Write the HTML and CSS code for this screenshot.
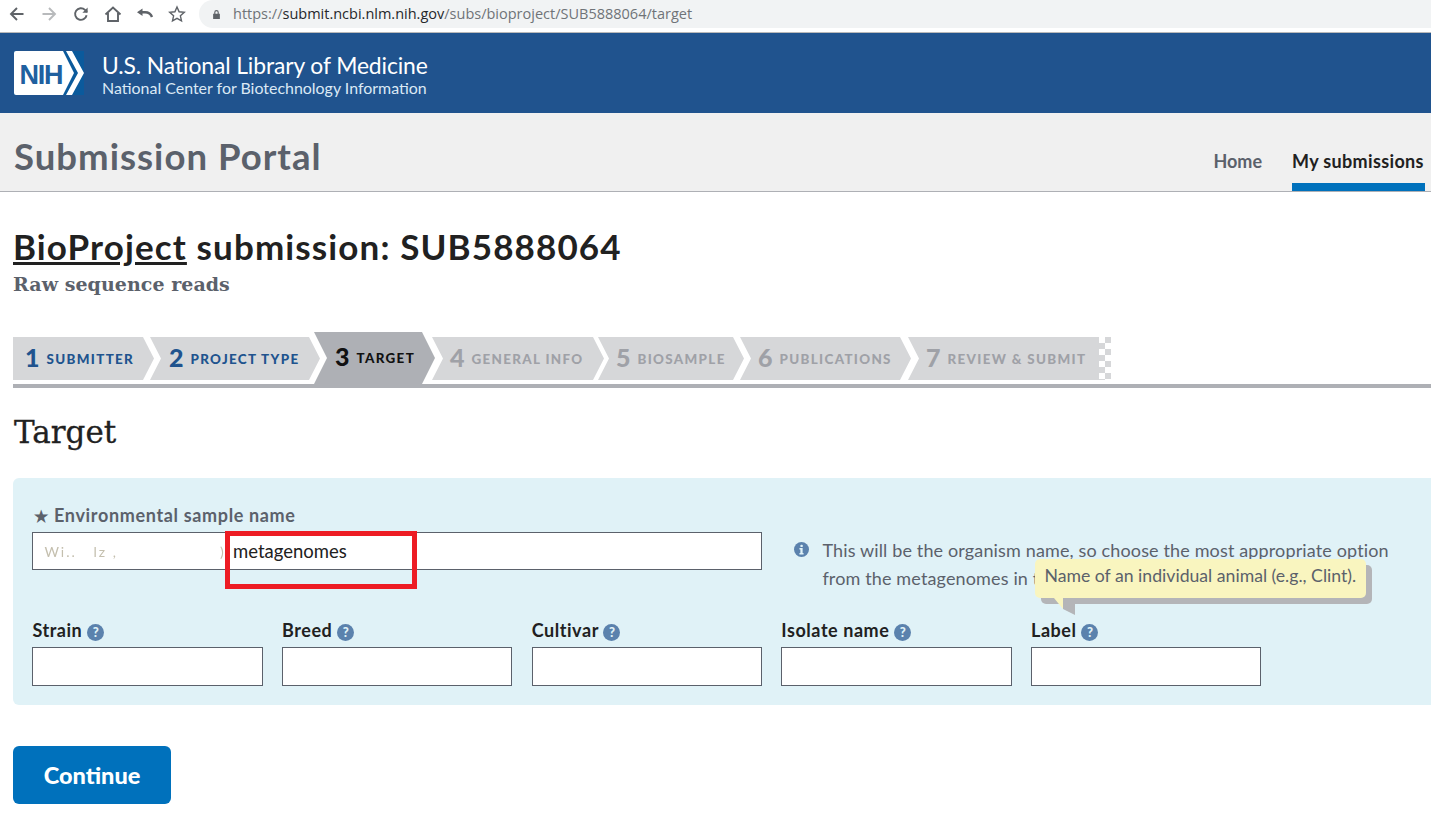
FILE: index.html
```html
<!DOCTYPE html>
<html lang="en">
<head>
<meta charset="utf-8">
<title>BioProject submission</title>
<link rel="stylesheet" href="styles.css">
</head>
<body>
<div class="browser">
  <div class="tools">
    <svg class="tool" viewBox="0 0 18 18"><path d="M15.500 9H3.500M9 3 3 9l6 6" class="st"/></svg>
    <svg class="tool" viewBox="0 0 18 18"><path d="M2.500 9h12M9 3l6 6-6 6" class="st light"/></svg>
    <svg class="tool" viewBox="0 0 18 18"><path d="M14.600 10.200A5.800 5.800 0 1 1 13 4.900L15 7" class="st"/><path d="M15.600 2.600v5.200h-5.200z" class="fl"/></svg>
    <svg class="tool" viewBox="0 0 18 18"><path d="M1.500 9.500 9 2.500l7.500 7M4 8v8h10V8" class="st"/></svg>
    <svg class="tool" viewBox="0 0 18 18"><path d="M6.500 3.500v7.500L1 7.200z" class="fl"/><path d="M5 7.200h4c3.500 0 6 1.800 7 4.800" class="st wide"/></svg>
    <svg class="tool" viewBox="0 0 18 18"><path d="m9 2 2.100 4.800 5.200.5-3.900 3.500 1.100 5.100L9 13.300l-4.500 2.600 1.100-5.100L1.700 7.300l5.200-.5z" class="st thin"/></svg>
  </div>
  <div class="url">
    <svg class="lock" viewBox="0 0 12 14"><path d="M3 6V4a3 3 0 0 1 6 0v2h1.500v7h-9V6zm1.500 0h3V4a1.500 1.500 0 0 0-3 0z"/></svg>
    <span class="u-grey">https://</span><span class="u-dark">submit.ncbi.nlm.nih.gov</span><span class="u-grey">/subs/bioproject/SUB5888064/target</span>
  </div>
</div>

<header class="nih">
  <svg class="logo" viewBox="0 0 70 44">
    <rect width="70" height="44" fill="#0b5a9c"/>
    <path d="M2 0h47l11 22-11 22H2a2 2 0 0 1-2-2V2a2 2 0 0 1 2-2z" fill="#fff"/>
    <path d="M52 0h6l12 22-12 22h-6l12-22z" fill="#fff"/>
    <text x="5.500" y="33" class="logo-text">NIH</text>
  </svg>
  <div class="nih-titles">
    <div class="nih-main">U.S. National Library of Medicine</div>
    <div class="nih-sub">National Center for Biotechnology Information</div>
  </div>
</header>

<div class="portal">
  <div class="portal-title">Submission Portal</div>
  <nav class="portal-nav">
    <a class="pn">Home</a>
    <a class="pn current">My submissions</a>
  </nav>
</div>

<main class="content">
  <h1 class="title"><a class="title-link">BioProject</a> submission: SUB5888064</h1>
  <div class="subtitle">Raw sequence reads</div>

  <div class="steps">
    <div class="step first s1"><b>1</b><span>SUBMITTER</span></div>
    <div class="step s2"><b>2</b><span>PROJECT TYPE</span></div>
    <div class="step active s3"><b>3</b><span>TARGET</span></div>
    <div class="step off s4"><b>4</b><span>GENERAL INFO</span></div>
    <div class="step off s5"><b>5</b><span>BIOSAMPLE</span></div>
    <div class="step off s6"><b>6</b><span>PUBLICATIONS</span></div>
    <div class="step off last s7"><b>7</b><span>REVIEW &amp; SUBMIT</span></div>
    <div class="checker"></div>
  </div>

  <h2 class="section">Target</h2>

  <section class="panel">
    <div class="row-top">
      <div class="main-field">
        <label class="req"><span class="star">★</span> Environmental sample name</label>
        <div class="input big"><span class="smudge">Wi..   lz ,</span><span class="smudge two">)</span><span class="val">metagenomes</span></div>
      </div>
      <div class="hint">
        <svg class="info" viewBox="0 0 16 16"><circle cx="8" cy="8" r="8" fill="#5b82ad"/><rect x="6.800" y="2.800" width="2.600" height="2.600" rx="1" fill="#e0f2f7"/><path d="M5.800 6.500h3.400v5.300h1v1.500H5.800v-1.500h1V8h-1z" fill="#e0f2f7"/></svg>
        <p>This will be the organism name, so choose the most appropriate option from the metagenomes in the taxonomy browser.</p>
      </div>
    </div>
    <div class="row-fields">
      <div class="f"><label>Strain <i class="q">?</i></label><div class="input"></div></div>
      <div class="f"><label>Breed <i class="q">?</i></label><div class="input"></div></div>
      <div class="f"><label>Cultivar <i class="q">?</i></label><div class="input"></div></div>
      <div class="f"><label>Isolate name <i class="q">?</i></label><div class="input"></div></div>
      <div class="f"><label>Label <i class="q">?</i></label><div class="input"></div></div>
    </div>
    <div class="tip">Name of an individual animal (e.g., Clint).</div>
    <div class="redbox"></div>
  </section>

  <button class="continue">Continue</button>
</main>
</body>
</html>
```
FILE: styles.css
```css
* { box-sizing: border-box; }
html, body { margin: 0; padding: 0; }
body { width: 1431px; height: 817px; overflow: hidden; background: #fff; font-family: "Lato", "Noto Sans", sans-serif; color: #212121; }

.browser { height: 33px; display: flex; background: #fff; border-bottom: 1px solid #b9b9b9; }
.tools { width: 199px; display: flex; gap: 14px; padding: 5px 0 0 8px; }
.tool { width: 18px; height: 18px; }
.st { fill: none; stroke: #5f6368; stroke-width: 1.900; }
.st.light { stroke: #b8babc; }
.st.thin { stroke-width: 1.400; }
.st.wide { stroke-width: 2.400; }
.fl { fill: #5f6368; }
.url { flex: 1; height: 28px; background: #f1f3f4; border-radius: 14px 0 0 14px; display: flex; align-items: center; padding-left: 13px; font: 14.500px/28px "Open Sans", sans-serif; }
.lock { width: 9px; height: 11px; fill: #5f6368; margin-right: 12px; }
.u-grey { color: #6f7378; }
.u-dark { color: #26282b; }

.nih { height: 80px; background: #20538e; display: flex; align-items: flex-start; padding: 18px 0 0 14px; }
.logo { width: 70px; height: 44px; display: block; }
.logo-text { font: 700 27px "Liberation Sans", sans-serif; fill: #20609f; letter-spacing: -1.200px; }
.nih-titles { margin: -1px 0 0 18px; color: #fff; }
.nih-main { font-size: 22.850px; line-height: 30px; letter-spacing: -.1px; }
.nih-sub { font-size: 15.950px; line-height: 15px; color: #dbe9f5; }

.portal { height: 79px; background: #f0f0f0; border-bottom: 1px solid #aeb0b5; display: flex; justify-content: space-between; padding-left: 14px; }
.portal-title { font-size: 36.500px; font-weight: 700; color: #5b616b; line-height: 87px; letter-spacing: 1.030px; height: 78px; }
.portal-nav { display: flex; align-items: flex-start; gap: 30px; padding-right: 6px; }
.pn { font-size: 18px; font-weight: 700; color: #5b616b; height: 78px; line-height: 96px; white-space: nowrap; }
.pn.current { color: #212121; border-bottom: 8px solid #0071bc; width: 133px; letter-spacing: .35px; }

.content { padding-left: 13px; }
.title { margin: 34px 0 0; font-size: 35px; line-height: 40px; font-weight: 700; color: #212121; letter-spacing: 1.120px; }
.title-link { text-decoration: underline; }
.subtitle { margin-top: 5px; font: 700 19px/26px "DejaVu Serif", serif; color: #5b616b; letter-spacing: .05px; }

.steps { margin-top: 35px; height: 56px; display: flex; border-bottom: 4px solid #aeb0b5; align-items: flex-start; }
.step { height: 43px; margin-top: 5px; background: #d6d7d9; display: flex; align-items: center; gap: 7px; padding-left: 19px; color: #20538e; clip-path: polygon(0 0, calc(100% - 11px) 0, 100% 50%, calc(100% - 11px) 100%, 0 100%, 11px 50%); font-weight: 700; flex: none; white-space: nowrap; }
.step b { font-size: 25px; font-weight: 900; margin-top: -4px; }
.step span { font-size: 13.400px; letter-spacing: 1.330px; font-weight: 900; }
.step.first { padding-left: 12px; clip-path: polygon(0 0, calc(100% - 11px) 0, 100% 50%, calc(100% - 11px) 100%, 0 100%); }
.step.active { height: 52px; margin-top: 0; background: #aeb0b5; color: #111; padding-left: 21px; clip-path: polygon(0 0, calc(100% - 13px) 0, 100% 50%, calc(100% - 13px) 100%, 0 100%, 13px 50%); }
.step.off { color: #9fa1a7; padding-left: 18px; }
.step.last { clip-path: polygon(0 0, 100% 0, 100% 100%, 0 100%, 11px 50%); }
.s1 { width: 141px; }
.s2 { width: 170px; margin-left: -4px; }
.s3 { width: 121px; margin-left: -6px; }
.s4 { width: 172px; margin-left: -3px; }
.s5 { width: 146px; margin-left: -6px; }
.s6 { width: 171px; margin-left: -4px; }
.s7 { width: 191px; margin-left: -3px; }
.checker { width: 12px; height: 43px; margin-top: 5px; background: conic-gradient(#d6d7d9 25%, #fff 0 50%, #d6d7d9 0 75%, #fff 0) 0 0 / 12px 12px; }

.section { margin: 24px 0 0 1px; font: 400 31px/40px "DejaVu Serif", serif; color: #212121; -webkit-text-stroke: .3px #212121; }

.panel { position: relative; margin-top: 26px; height: 227px; background: #e0f2f7; border-radius: 6px 0 0 6px; padding: 27px 0 0 19.400px; }
.row-top { display: flex; }
.main-field { width: 730px; flex: none; }
label { display: block; font-size: 18px; font-weight: 700; line-height: 21px; letter-spacing: .55px; }
.req { color: #5b616b; height: 27px; letter-spacing: .65px; }
.star { font-size: 16px; display: inline-block; margin: 0 0 0 2px; }
.input { height: 39px; background: #fff; border: 1px solid #5b616b; }
.input.big { height: 38px; display: flex; align-items: center; }
.val { position: absolute; left: 220px; color: #212121; font-size: 18.500px; }
.smudge { color: #c4bfae; font-size: 14px; margin-left: 11px; filter: blur(.5px); letter-spacing: 2px; white-space: pre; }
.smudge.two { margin-left: 0; position: absolute; left: 207px; }
.hint { display: flex; margin: 34px 0 0 32px; width: 600px; color: #5b616b; font-size: 18px; line-height: 28px; height: 58px; overflow: hidden; letter-spacing: .14px; }
.hint p { margin: -3px 0 0; padding-left: 13px; width: 582px; }
.info { width: 15px; height: 15px; flex: none; margin-top: 3px; }

.row-fields { display: grid; grid-template-columns: repeat(5, 1fr); gap: 19.250px; width: 1229px; margin-top: 23px; }
.row-fields label { height: 27px; color: #212121; }
.q { display: inline-block; width: 17px; height: 17px; border-radius: 50%; background: #5b82ad; color: #e0f2f7; font: 900 13px/17px "Lato", sans-serif; text-align: center; letter-spacing: 0; vertical-align: 0; margin-left: 0; }

.tip { position: absolute; left: 1022px; top: 81px; height: 39px; padding: 0 10px 0 9.500px; background: #f9f5bf; color: #5b616b; font-size: 17.650px; line-height: 34px; border-radius: 5px; box-shadow: 6px 6px 0 #b4b5b8; white-space: nowrap; }
.tip::after { content: ""; position: absolute; left: 19px; top: 39px; width: 9px; height: 11px; background: #f9f5bf; clip-path: polygon(0 0, 100% 0, 100% 100%); }
.tip::before { content: ""; position: absolute; left: 28px; top: 39px; width: 12px; height: 17px; background: #b4b5b8; clip-path: polygon(0 0, 100% 0, 100% 100%, 0 65%); }
.redbox { position: absolute; left: 212px; top: 53px; width: 192px; height: 58px; border: 5px solid #ed1c24; }

.continue { display: block; margin-top: 41px; width: 158px; height: 58px; background: #0071bc; border: 0; border-radius: 6px; color: #fff; font: 900 23.500px "Lato", sans-serif; }
```
